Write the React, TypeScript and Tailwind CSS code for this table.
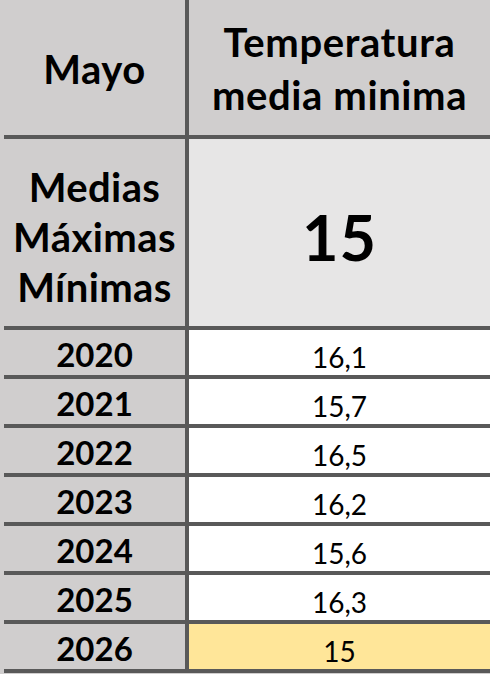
import React from "react";

const rows: { year: string; value: string; highlight?: boolean }[] = [
  { year: "2020", value: "16,1" },
  { year: "2021", value: "15,7" },
  { year: "2022", value: "16,5" },
  { year: "2023", value: "16,2" },
  { year: "2024", value: "15,6" },
  { year: "2025", value: "16,3" },
  { year: "2026", value: "15", highlight: true },
];

export default function App() {
  return (
    <div
      className="flex w-[490px] h-[674px] bg-[#d0cece] text-black"
      style={{ fontFamily: "Lato, 'Noto Sans', sans-serif" }}
    >
      <div className="w-[4px] shrink-0" />
      <div className="flex flex-1 flex-col">
        {/* header */}
        <div className="grid h-[139px] grid-cols-[181px_1fr] border-b-4 border-[#595959]">
          <div className="flex items-center justify-center pt-[2px] text-[40px] font-bold leading-[52px] tracking-[0.5px]">
            Mayo
          </div>
          <div className="flex flex-col items-center justify-center border-l-4 border-[#595959] pt-[2px] text-center text-[40px] font-bold leading-[53px] tracking-[0.6px]">
            <span>Temperatura</span>
            <span>media minima</span>
          </div>
        </div>
        {/* big row */}
        <div className="grid h-[191px] grid-cols-[181px_1fr] border-b-4 border-[#595959]">
          <div className="flex flex-col items-center justify-center pt-[8px] text-center text-[40px] font-bold leading-[50px] tracking-[0.4px]">
            <span>Medias</span>
            <span>Máximas</span>
            <span>Mínimas</span>
          </div>
          <div className="flex items-center justify-center border-l-4 border-[#595959] bg-[#e7e6e6] pt-[8px] text-[63px] font-bold leading-none tracking-[1px]">
            15
          </div>
        </div>
        {rows.map((r) => (
          <div
            key={r.year}
            className="grid h-[49px] grid-cols-[181px_1fr] border-b-4 border-[#595959]"
          >
            <div className="flex items-end justify-center pb-[2px] text-[33px] font-bold leading-[38px]">
              {r.year}
            </div>
            <div
              className={
                r.highlight
                  ? "flex items-end justify-center border-l-4 border-[#595959] bg-[#ffe699] pb-[2px] text-[28px] leading-[32px]"
                  : "flex items-end justify-center border-l-4 border-[#595959] bg-white pb-[2px] text-[28px] leading-[32px]"
              }
            >
              {r.value}
            </div>
          </div>
        ))}
      </div>
    </div>
  );
}
